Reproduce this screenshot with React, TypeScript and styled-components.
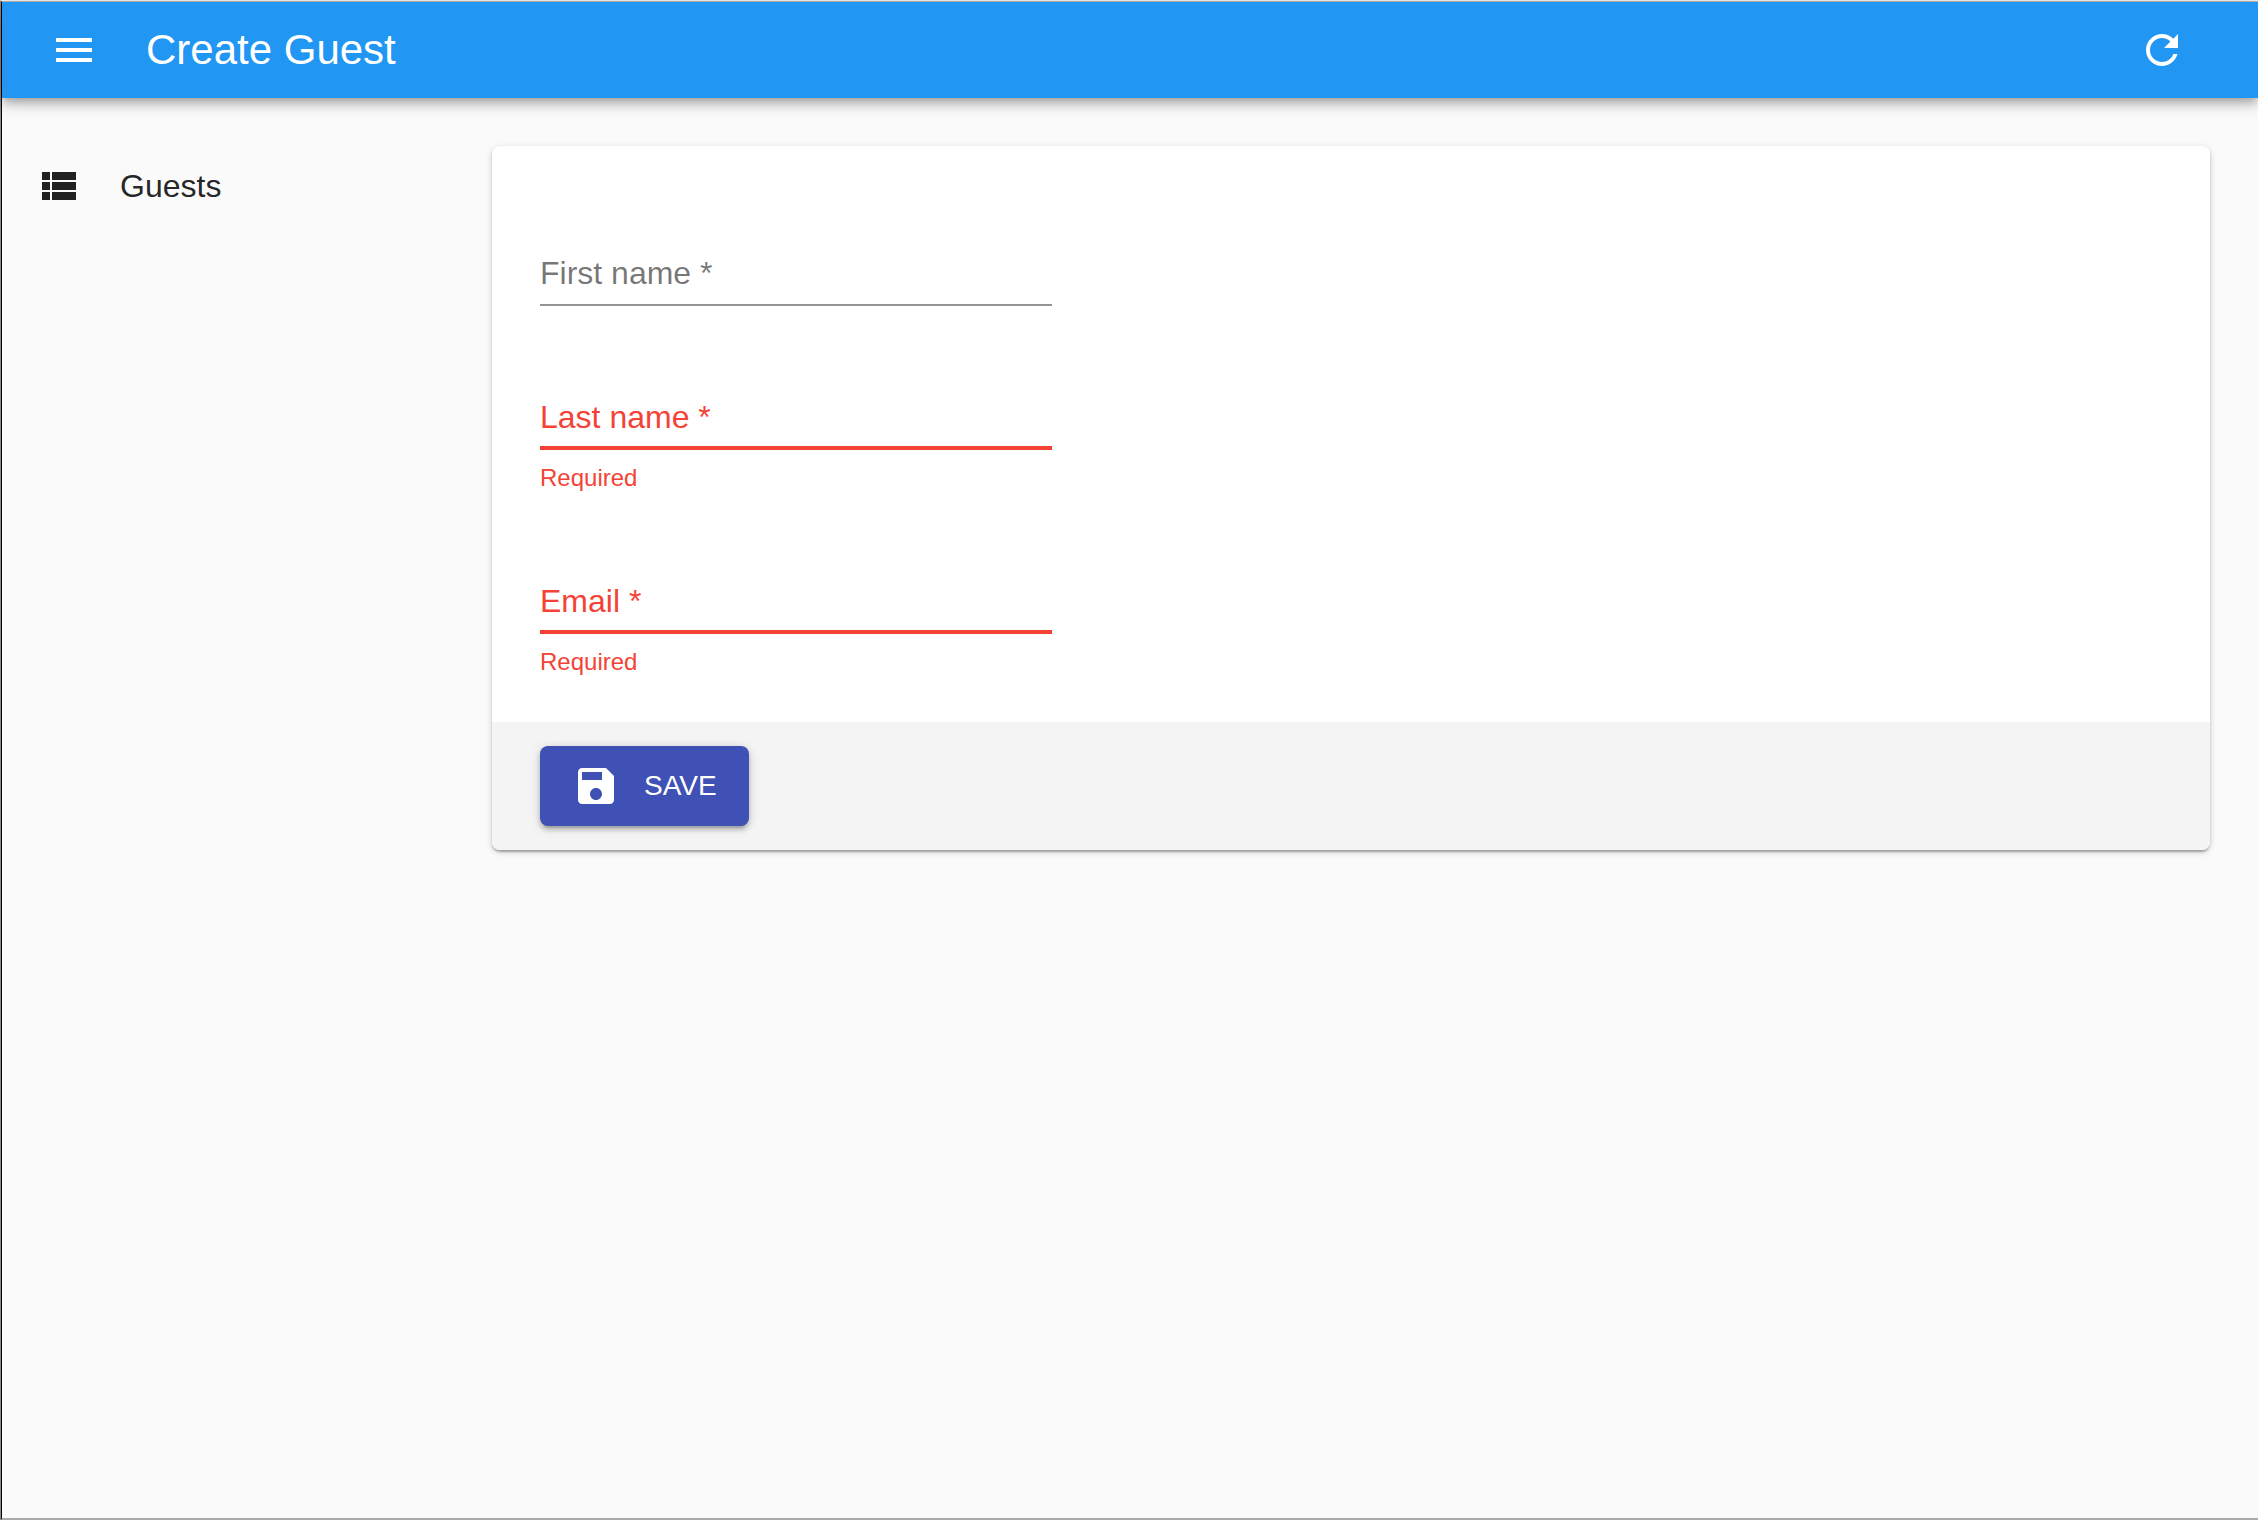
import React, { useState } from 'react';
import styled, { createGlobalStyle } from 'styled-components';

const GlobalStyle = createGlobalStyle`
  *, *::before, *::after { box-sizing: border-box; }
  body {
    margin: 0;
    background: #fafafa;
    color: rgba(0, 0, 0, 0.87);
    font-family: "Liberation Sans", Helvetica, Arial, sans-serif;
  }
`;

const Frame = styled.div`
  display: flex;
  min-height: 100vh;
  border-top: 1px solid #f0f0f0;
  border-left: 1px solid #8c8c90;
`;

const Window = styled.div`
  display: flex;
  flex: 1;
  flex-direction: column;
  border-top: 1px solid #b4b4b4;
  border-bottom: 2px solid #aaa9ad;
  border-left: 1px solid #000;
`;

const AppBar = styled.header`
  display: flex;
  align-items: center;
  gap: 24px;
  height: 96px;
  padding: 0 48px 0 24px;
  background: #2196f3;
  color: #fff;
  box-shadow: 0 4px 8px -2px rgba(0, 0, 0, 0.2), 0 8px 10px 0 rgba(0, 0, 0, 0.14),
    0 2px 20px 0 rgba(0, 0, 0, 0.12);
`;

const IconButton = styled.button`
  display: flex;
  padding: 24px;
  border: 0;
  border-radius: 50%;
  background: none;
  color: inherit;
  cursor: pointer;
`;

const Title = styled.h1`
  flex: 1;
  margin: 0;
  font-size: 42px;
  line-height: 48px;
  font-weight: 400;
`;

const Svg = styled.svg`
  display: block;
  width: 48px;
  height: 48px;
  fill: currentColor;
`;

const Body = styled.div`
  display: flex;
  flex: 1;
`;

const Sidebar = styled.nav`
  flex: 0 0 480px;
  padding-top: 48px;
`;

const MenuLink = styled.a`
  display: flex;
  align-items: center;
  gap: 38px;
  padding: 16px 32px;
  color: inherit;
  font-size: 32px;
  line-height: 48px;
  text-decoration: none;
`;

const Content = styled.main`
  flex: 1;
  padding: 48px 48px 48px 10px;
`;

const Card = styled.form`
  overflow: hidden;
  border-radius: 8px;
  background: #fff;
  box-shadow: 0 2px 6px 0 rgba(0, 0, 0, 0.2), 0 2px 2px 0 rgba(0, 0, 0, 0.14),
    0 4px 2px -2px rgba(0, 0, 0, 0.12);
`;

const Fields = styled.div`
  display: flex;
  flex-direction: column;
  gap: 48px;
  padding: 64px 48px 48px;
`;

const FieldBox = styled.div<{ $error: boolean }>`
  width: 512px;
  max-width: 100%;
  padding-top: 32px;
  color: ${(p) => (p.$error ? '#f44336' : 'rgba(0, 0, 0, 0.54)')};
`;

const InputArea = styled.div`
  display: grid;

  > * {
    grid-area: 1 / 1;
  }
`;

const Label = styled.label`
  padding: 12px 0 14px;
  font-size: 32px;
  line-height: 38px;
  pointer-events: none;
`;

const Input = styled.input<{ $error: boolean }>`
  width: 100%;
  height: 64px;
  padding: 0;
  border: 0;
  border-bottom: ${(p) => (p.$error ? '4px solid #f44336' : '2px solid #949494')};
  border-radius: 0;
  outline: 0;
  background: none;
  color: rgba(0, 0, 0, 0.87);
  font: inherit;
  font-size: 32px;
`;

const HelperText = styled.p`
  margin: 16px 0 0;
  font-size: 24px;
  line-height: 24px;
`;

const Footer = styled.footer`
  display: flex;
  padding: 24px 48px;
  background: #f4f4f4;
`;

const SaveButton = styled.button`
  display: flex;
  align-items: center;
  gap: 24px;
  padding: 16px 32px;
  border: 0;
  border-radius: 8px;
  background: #3f51b5;
  color: #fff;
  font: inherit;
  font-size: 28px;
  line-height: 48px;
  text-transform: uppercase;
  cursor: pointer;
  box-shadow: 0 2px 10px 0 rgba(0, 0, 0, 0.2), 0 4px 4px 0 rgba(0, 0, 0, 0.14),
    0 6px 2px -4px rgba(0, 0, 0, 0.12);
`;

function Icon({ path }: { path: string }) {
  return (
    <Svg viewBox="0 0 24 24" aria-hidden="true">
      <path d={path} />
    </Svg>
  );
}

const icons = {
  menu: 'M3 18h18v-2H3v2zm0-5h18v-2H3v2zm0-7v2h18V6H3z',
  refresh:
    'M17.65 6.35C16.2 4.9 14.21 4 12 4c-4.42 0-7.99 3.58-7.99 8s3.57 8 7.99 8c3.73 0 6.84-2.55 7.73-6h-2.08c-.82 2.33-3.04 4-5.65 4-3.31 0-6-2.69-6-6s2.69-6 6-6c1.66 0 3.14.69 4.22 1.78L13 11h7V4l-2.35 2.35z',
  list: 'M4 14h4v-4H4v4zm0 5h4v-4H4v4zM4 9h4V5H4v4zm5 5h12v-4H9v4zm0 5h12v-4H9v4zM9 5v4h12V5H9z',
  save: 'M17 3H5c-1.11 0-2 .9-2 2v14c0 1.1.89 2 2 2h14c1.1 0 2-.9 2-2V7l-4-4zm-5 16c-1.66 0-3-1.34-3-3s1.34-3 3-3 3 1.34 3 3-1.34 3-3 3zm3-10H5V5h10v4z',
};

interface FieldProps {
  id: string;
  label: string;
  type?: string;
  error?: string;
}

function Field({ id, label, type = 'text', error }: FieldProps) {
  const [value, setValue] = useState('');
  const invalid = Boolean(error);
  return (
    <FieldBox $error={invalid}>
      <InputArea>
        <Label htmlFor={id}>{value ? '' : `${label} *`}</Label>
        <Input
          id={id}
          name={id}
          type={type}
          value={value}
          onChange={(e) => setValue(e.target.value)}
          $error={invalid}
          aria-label={label}
          aria-invalid={invalid}
          aria-describedby={error ? `${id}-helper` : undefined}
        />
      </InputArea>
      {error && <HelperText id={`${id}-helper`}>{error}</HelperText>}
    </FieldBox>
  );
}

export default function App() {
  return (
    <>
      <GlobalStyle />
      <Frame>
        <Window>
          <AppBar>
            <IconButton type="button" aria-label="Toggle menu">
              <Icon path={icons.menu} />
            </IconButton>
            <Title>Create Guest</Title>
            <IconButton type="button" aria-label="Refresh">
              <Icon path={icons.refresh} />
            </IconButton>
          </AppBar>
          <Body>
            <Sidebar>
              <MenuLink href="#guests">
                <Icon path={icons.list} />
                Guests
              </MenuLink>
            </Sidebar>
            <Content>
              <Card noValidate onSubmit={(e) => e.preventDefault()}>
                <Fields>
                  <Field id="firstName" label="First name" />
                  <Field id="lastName" label="Last name" error="Required" />
                  <Field id="email" label="Email" type="email" error="Required" />
                </Fields>
                <Footer>
                  <SaveButton type="submit">
                    <Icon path={icons.save} />
                    Save
                  </SaveButton>
                </Footer>
              </Card>
            </Content>
          </Body>
        </Window>
      </Frame>
    </>
  );
}
